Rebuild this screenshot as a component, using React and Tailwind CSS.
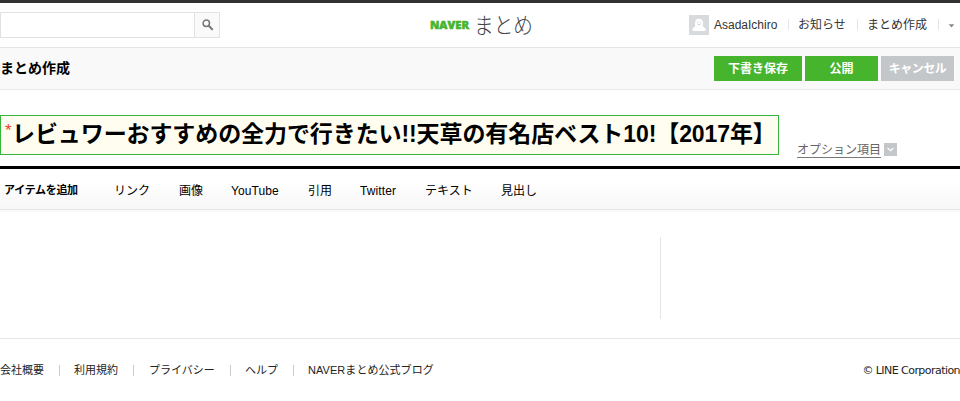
const sans = "font-['Liberation_Sans','Noto_Sans_CJK_JP',sans-serif]";

function SearchIcon() {
  return (
    <svg width="12" height="12" viewBox="0 0 12 12" fill="none" stroke="#777">
      <circle cx="4.3" cy="4.2" r="3.2" strokeWidth="1.5" />
      <path d="M6.8 6.8L10.7 10.9" strokeWidth="2.1" />
    </svg>
  );
}

function Avatar() {
  return (
    <svg width="20" height="20" viewBox="0 0 20 20">
      <rect width="20" height="20" fill="#d8dbde" />
      <path d="M3.5 16v-2.4l2.6-2.2V7.6a3.9 3.9 0 0 1 7.8 0v3.8l2.6 2.2V16z" fill="#fff" />
      <path d="M8 7.2h1M11 7.2h1M8.4 9q1.6 1.2 3.2 0" stroke="#c5c9cc" strokeWidth=".9" fill="none" />
    </svg>
  );
}

function Divider({ className }) {
  return <span className={`w-px shrink-0 ${className}`} />;
}

function Item({ className, children }) {
  return <a className={`shrink-0 whitespace-nowrap ${className}`}>{children}</a>;
}

export default function App() {
  return (
    <div className={`flex h-[401px] w-[960px] flex-col overflow-hidden bg-white text-[12px] leading-[18px] text-black ${sans}`}>
      <header className="flex h-12 shrink-0 border-t-[3px] border-b border-t-[#333132] border-b-[#e5e5e5]">
        <div className="mt-[9px] flex h-[26px] w-[220px] shrink-0 border border-[#e2e2e2]">
          <div className="w-[194px] border-r border-[#e2e2e2]" />
          <button className="flex flex-1 items-center justify-center bg-[#fafafa] pl-px">
            <SearchIcon />
          </button>
        </div>
        <div className="ml-[209px] flex w-[110px] shrink-0">
          <svg width="110" height="43" viewBox="0 0 110 43">
            <text x="1" y="26" textLength="39" lengthAdjust="spacingAndGlyphs" className="fill-[#46b42c] stroke-[#46b42c] stroke-[0.5] font-['Open_Sans','Lato',sans-serif] text-[10.5px] font-extrabold">NAVER</text>
            <text x="45" y="30" textLength="59" lengthAdjust="spacingAndGlyphs" className="fill-[#444] font-['Noto_Sans_CJK_JP',sans-serif] text-[21.5px] font-light">まとめ</text>
          </svg>
        </div>
        <nav className="ml-[150px] flex h-[43px] w-[271px] shrink-0 items-center text-[#333]">
          <Avatar />
          <Item className="ml-[5px] w-[74px]">AsadaIchiro</Item>
          <Divider className="h-[11px] bg-[#e5e5e5]" />
          <Item className="ml-[9px] w-[59px]">お知らせ</Item>
          <Divider className="h-[11px] bg-[#e5e5e5]" />
          <Item className="ml-[9px] w-[71px]">まとめ作成</Item>
          <Divider className="h-[11px] bg-[#e5e5e5]" />
          <svg className="mt-0.5 ml-[9px] shrink-0" width="7" height="4" viewBox="0 0 7 4"><path d="M.7.3h5.6L3.5 3.6z" fill="#888" /></svg>
        </nav>
      </header>

      <div className="flex h-[42px] shrink-0 items-center justify-between border-b border-[#e8e8e8] bg-[#f9f9f9] pr-1.5">
        <h1 className="pb-0.5 text-[14px] font-bold">まとめ作成</h1>
        <div className="flex gap-[3px] font-bold text-white">
          <button className="h-[25px] w-[88px] bg-[#46b42c]">下書き保存</button>
          <button className="h-[25px] w-[73px] bg-[#46b42c]">公開</button>
          <button className="h-[25px] w-[73px] bg-[#c3c7ca] tracking-[-0.5px]">キャンセル</button>
        </div>
      </div>

      <div className="flex h-[76px] shrink-0 pt-[25px]">
        <div className="flex h-10 w-[779px] shrink-0 border border-[#35b53c] bg-[#fffdef]">
          <span className="ml-1 w-[7px] shrink-0 pt-[6px] text-[17px] text-[#f03c1c]">*</span>
          <span className="shrink-0 whitespace-nowrap text-[23px] leading-[37px] font-bold tracking-[-0.09px]">レビュワーおすすめの全力で行きたい!!天草の有名店ベスト10!【2017年】</span>
        </div>
        <div className="mt-[27px] ml-[18px] flex h-[15px] items-center">
          <a className="w-[84px] border-b border-[#777] pt-px text-[12px] leading-[14px] text-[#666]">オプション項目</a>
          <svg className="ml-[3px]" width="13" height="13" viewBox="0 0 13 13">
            <rect width="13" height="13" fill="#c3c7ca" />
            <path d="M3.5 5l3 2.7 3-2.7" fill="none" stroke="#fff" strokeWidth="1.2" />
          </svg>
        </div>
      </div>

      <nav className="flex h-11 shrink-0 items-center border-t-[3px] border-b border-t-black border-b-[#e5e5e5] bg-linear-to-b from-white from-30% to-[#f7f7f7] pt-[3px] pl-1">
        <Item className="w-[110px] pb-0.5 text-[11px] font-bold tracking-[-0.3px]">アイテムを追加</Item>
        <Item className="w-[65px]">リンク</Item>
        <Item className="w-[52px]">画像</Item>
        <Item className="w-[77px] tracking-[0.1px]">YouTube</Item>
        <Item className="w-[52px]">引用</Item>
        <Item className="w-[65px] tracking-[0.1px]">Twitter</Item>
        <Item className="w-[76px]">テキスト</Item>
        <Item className="w-[50px]">見出し</Item>
      </nav>

      <main className="flex h-32 shrink-0 border-t-2 border-[#f9f9f9] pt-[25px]">
        <section className="h-[82px] w-[661px] border-r border-[#e5e5e5]" />
        <aside className="flex-1" />
      </main>

      <footer className="flex shrink-0 items-start border-t border-[#e5e5e5] pt-[22px] text-[11px] text-[#222]">
        <Item className="w-[59px]">会社概要</Item>
        <Divider className="mt-1 h-[11px] bg-[#ccc]" />
        <Item className="ml-[14px] w-[59px]">利用規約</Item>
        <Divider className="mt-1 h-[11px] bg-[#ccc]" />
        <Item className="ml-[15px] w-[81px]">プライバシー</Item>
        <Divider className="mt-1 h-[11px] bg-[#ccc]" />
        <Item className="ml-[14px] w-[48px]">ヘルプ</Item>
        <Divider className="mt-1 h-[11px] bg-[#ccc]" />
        <Item className="ml-[14px] tracking-[0.05px]">NAVERまとめ公式ブログ</Item>
        <small className="mt-px ml-auto whitespace-nowrap font-['DejaVu_Sans',sans-serif] text-[11px] tracking-[-0.55px]">© LINE Corporation</small>
      </footer>
    </div>
  );
}
